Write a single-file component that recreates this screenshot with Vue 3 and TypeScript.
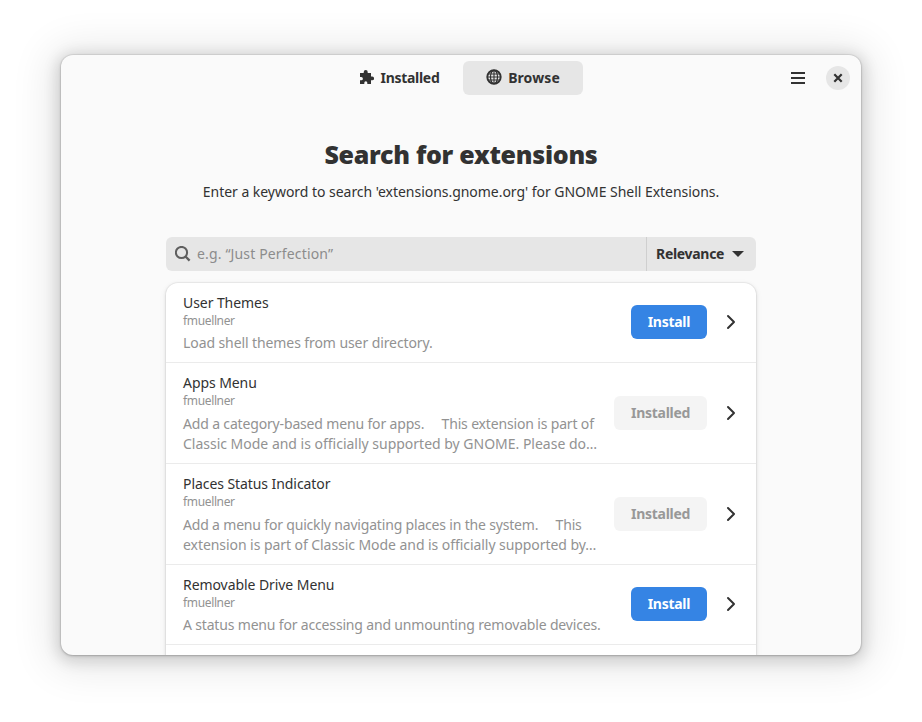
<script setup lang="ts">
import { ref } from 'vue'

interface Line {
  text: string
  tracking: number
}

interface Extension {
  name: string
  author: string
  lines: Line[]
  installed: boolean
}

const query = ref('')

const extensions: Extension[] = [
  {
    name: 'User Themes',
    author: 'fmuellner',
    lines: [{ text: 'Load shell themes from user directory.', tracking: -0.09 }],
    installed: false,
  },
  {
    name: 'Apps Menu',
    author: 'fmuellner',
    lines: [
      { text: 'Add a category-based menu for apps.\u2003 This extension is part of', tracking: -0.16 },
      { text: 'Classic Mode and is officially supported by GNOME. Please do…', tracking: -0.01 },
    ],
    installed: true,
  },
  {
    name: 'Places Status Indicator',
    author: 'fmuellner',
    lines: [
      { text: 'Add a menu for quickly navigating places in the system.\u2003 This', tracking: -0.18 },
      { text: 'extension is part of Classic Mode and is officially supported by…', tracking: -0.06 },
    ],
    installed: true,
  },
  {
    name: 'Removable Drive Menu',
    author: 'fmuellner',
    lines: [{ text: 'A status menu for accessing and unmounting removable devices.', tracking: -0.17 }],
    installed: false,
  },
]
</script>

<template>
  <div class="desktop">
    <main class="window">
      <header class="bar">
        <nav class="tabs">
          <button class="tab">
            <svg class="puzzle" width="16" height="16" viewBox="0 0 16 16">
              <path
                fill="currentColor"
                d="M1 4h3.700V3a2 2 0 0 1 4 0v1H12v3.500h1.200a1.900 1.900 0 0 1 0 3.800H12V15H8.300v-1.200a1.500 1.500 0 0 0-3 0V15H1v-3.700h1.300a1.600 1.600 0 0 0 0-3.200H1z"
              />
            </svg>
            <span class="label">Installed</span>
          </button>
          <button class="tab active">
            <svg class="globe" width="16" height="16" viewBox="0 0 16 16">
              <g fill="none" stroke="currentColor">
                <circle cx="8" cy="8" r="6.700" stroke-width="1.900" />
                <ellipse cx="8" cy="8" rx="3.500" ry="6.700" stroke-width="1.200" />
                <path d="M8 1v14M1 8h14M2 5h12M2 11h12" stroke-width="1.100" />
              </g>
            </svg>
            <span class="label wide">Browse</span>
          </button>
        </nav>
        <div class="controls">
          <svg width="16" height="16" viewBox="0 0 16 16">
            <path fill="currentColor" d="M1 2h14v2H1zM1 7h14v2H1zM1 12h14v2H1z" />
          </svg>
          <button class="close" aria-label="Close">
            <svg width="10" height="10" viewBox="0 0 10 10">
              <path d="M1.300 1.300l7.400 7.400M8.700 1.300L1.300 8.700" stroke="currentColor" stroke-width="2.200" />
            </svg>
          </button>
        </div>
      </header>

      <section class="intro">
        <h1><span>Search for extensions</span></h1>
        <p><span>Enter a keyword to search 'extensions.gnome.org' for GNOME Shell Extensions.</span></p>
      </section>

      <div class="search">
        <svg class="lens" width="16" height="16" viewBox="0 0 16 16">
          <g fill="none" stroke="currentColor" stroke-width="2">
            <circle cx="6.500" cy="6.500" r="5.600" />
            <path d="M10.500 10.500l4.100 4.100" stroke-width="2.300" />
          </g>
        </svg>
        <input v-model="query" type="text" placeholder="e.g. “Just Perfection”" />
        <button class="sort">
          <span class="label">Relevance</span>
          <svg width="12" height="6" viewBox="0 0 12 6"><path fill="currentColor" d="M0 0h12L6 6z" /></svg>
        </button>
      </div>

      <ul class="list">
        <li v-for="ext in extensions" :key="ext.name" class="row">
          <div class="info">
            <div class="name"><span>{{ ext.name }}</span></div>
            <div class="author"><span>{{ ext.author }}</span></div>
            <div class="desc" :class="{ multi: ext.lines.length > 1 }">
              <div v-for="line in ext.lines" :key="line.text" :style="{ letterSpacing: line.tracking + 'px' }">
                <span>{{ line.text }}</span>
              </div>
            </div>
          </div>
          <button class="action" :class="{ done: ext.installed }">
            <span class="label">{{ ext.installed ? 'Installed' : 'Install' }}</span>
          </button>
          <svg class="chevron" width="16" height="16" viewBox="0 0 16 16">
            <path
              d="M5 2l6 6-6 6"
              fill="none"
              stroke="currentColor"
              stroke-width="2"
              stroke-linecap="round"
              stroke-linejoin="round"
            />
          </svg>
        </li>
        <li class="row"></li>
      </ul>
    </main>
  </div>
</template>

<style>
body {
  margin: 0;
  background: #fff;
}
</style>

<style scoped>
.desktop {
  box-sizing: border-box;
  width: 922px;
  height: 722px;
  padding: 55px 61px 0;
  overflow: hidden;
  font-family: 'Noto Sans', 'Open Sans', sans-serif;
  font-size: 14px;
  color: #323232;
}
.window {
  width: 800px;
  height: 600px;
  overflow: hidden;
  border-radius: 12px;
  background: #fafafa;
  box-shadow:
    0 0 0 1px rgba(0, 0, 0, 0.05),
    0 1px 3px rgba(0, 0, 0, 0.22),
    0 3px 14px 5px rgba(0, 0, 0, 0.12),
    0 3px 40px 12px rgba(0, 0, 0, 0.09);
}
button {
  display: flex;
  align-items: center;
  justify-content: center;
  padding: 0;
  border: 0;
  background: none;
  color: inherit;
  font: inherit;
}
svg {
  display: block;
  flex: none;
}
span {
  white-space: pre;
}
.label {
  padding-bottom: 2px;
  font-weight: 700;
  letter-spacing: -0.3px;
}
.wide {
  letter-spacing: 0.1px;
}
.bar {
  display: grid;
  grid-template-columns: 1fr auto 1fr;
  align-items: center;
  height: 46px;
}
.tabs {
  grid-column: 2;
  display: flex;
  gap: 4px;
}
.tab {
  width: 120px;
  height: 34px;
  gap: 6px;
  border-radius: 6px;
}
.active {
  background: #e6e6e6;
}
.puzzle {
  margin-bottom: 2px;
}
.globe {
  margin-bottom: 3px;
}
.controls {
  display: flex;
  align-items: center;
  justify-content: flex-end;
  gap: 20px;
  padding-right: 11px;
}
.close {
  width: 24px;
  height: 24px;
  border-radius: 50%;
  background: #e6e6e6;
}
.intro {
  display: flex;
  flex-direction: column;
  align-items: center;
  padding-top: 35px;
}
h1 {
  margin: 0;
  font-size: 25px;
  font-weight: 900;
  line-height: 36px;
  letter-spacing: -0.28px;
}
p {
  margin: 10px 0 0;
  line-height: 20px;
  letter-spacing: -0.035px;
}
.search {
  display: flex;
  align-items: center;
  width: 590px;
  height: 34px;
  margin: 35px auto 0;
  border-radius: 6px;
  background: #e6e6e6;
}
.lens {
  margin: 0 6px 0 9px;
  color: #5f5f5f;
}
input {
  box-sizing: border-box;
  flex: 1;
  min-width: 0;
  height: 34px;
  padding: 0 0 2px;
  border: 0;
  outline: 0;
  background: none;
  font: inherit;
  letter-spacing: 0.15px;
}
input::placeholder {
  color: #8c8c8c;
  opacity: 1;
}
.sort {
  box-sizing: border-box;
  width: 110px;
  height: 34px;
  padding: 0 12px 0 9px;
  justify-content: space-between;
  border-left: 1px solid #cfcfcf;
}
.list {
  width: 590px;
  margin: 12px auto 0;
  padding: 0;
  list-style: none;
  border-radius: 12px;
  background: #fff;
  box-shadow:
    0 0 0 1px rgba(0, 0, 0, 0.04),
    0 1px 3px 1px rgba(0, 0, 0, 0.07),
    0 2px 6px 2px rgba(0, 0, 0, 0.03);
}
.row {
  box-sizing: border-box;
  display: flex;
  align-items: center;
  min-height: 80px;
  padding: 10px 17px 9px;
  border-bottom: 1px solid #ebebeb;
}
.info {
  flex: 1;
}
.name {
  line-height: 20px;
  letter-spacing: -0.07px;
}
.author {
  font-size: 12px;
  line-height: 16px;
  letter-spacing: -0.35px;
  color: #929292;
}
.desc {
  margin-top: 4px;
  color: #929292;
  line-height: 20px;
}
.multi {
  margin-top: 5px;
}
.action {
  height: 34px;
  margin-bottom: 1.5px;
  padding: 0 17px;
  border-radius: 6px;
  background: #3584e4;
  color: #fff;
}
.done {
  background: #f4f4f4;
  color: #989898;
}
.done .label {
  padding-bottom: 1px;
}
.chevron {
  margin: 0 0 1.5px 16px;
}
</style>
